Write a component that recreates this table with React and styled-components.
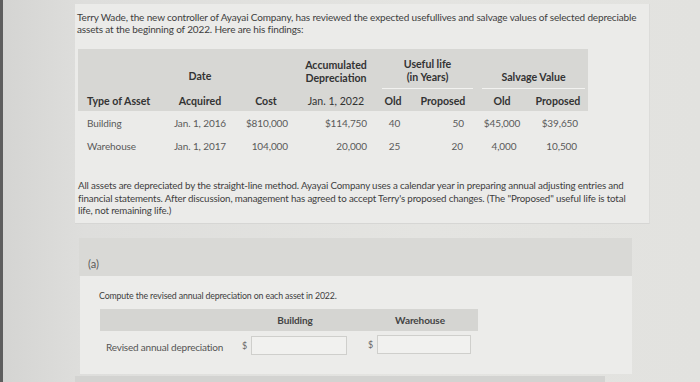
import React from "react";
import styled, { createGlobalStyle } from "styled-components";

const Global = createGlobalStyle`
  html, body { margin: 0; padding: 0; }
  body {
    width: 700px;
    height: 382px;
    overflow: hidden;
    font-family: Lato, "Open Sans", "Liberation Sans", sans-serif;
    background: linear-gradient(90deg, #d4d4d2 0%, #dededc 12%, #e4e4e1 60%, #e2e2df 100%);
  }
`;

const Page = styled.div`
  height: 382px;
  box-sizing: border-box;
  border-left: 3px solid #5e5e5e;
  padding: 4px 0 0 72px;
  display: flex;
  flex-direction: column;
`;

const Card = styled.section`
  width: 575px;
  height: 224px;
  box-sizing: border-box;
  background: #ebebe9;
  border-right: 1px solid #dcdcda;
  border-bottom: 1px solid #d6d6d4;
  padding: 7px 0 0 2px;
`;

const Text = styled.p`
  margin: 0;
  font-size: ${(p) => p.$size || 10}px;
  line-height: ${(p) => p.$lh || 12}px;
  color: #3e3e3e;
  letter-spacing: ${(p) => p.$ls ?? -0.15}px;
  white-space: nowrap;
`;

const Grid = styled.div`
  display: grid;
  grid-template-columns: 92px 60px 66px 80px 34px 66px 52px 60px;
  margin: 14px 0 0 1px;
  width: 510px;
`;

const HeadCell = styled.div`
  background: #d7d7d4;
  grid-column: ${(p) => p.$span || "auto"};
  height: ${(p) => p.$h}px;
  box-sizing: border-box;
  display: flex;
  flex-direction: column;
  justify-content: ${(p) => (p.$top ? "flex-end" : "center")};
  align-items: ${(p) => p.$align || "center"};
  text-align: center;
  padding: ${(p) => p.$pad || "0"};
  font-size: 10.6px;
  font-weight: ${(p) => (p.$light ? 400 : 700)};
  line-height: 12.5px;
  color: #333;
  white-space: nowrap;
`;

const GroupLabel = styled.div`
  align-self: stretch;
  margin: 0 3px 2px 6px;
  padding-bottom: 5px;
  border-bottom: 1px solid #f2f2f0;
`;

const DataCell = styled.div`
  height: 23px;
  display: flex;
  align-items: center;
  justify-content: ${(p) => p.$justify || "center"};
  padding: ${(p) => p.$pad || "0"};
  font-size: 10px;
  color: #5a5a5a;
  white-space: nowrap;
  letter-spacing: -0.1px;
`;

const Para = styled.div`
  margin-top: 22px;
  padding-left: 1px;
`;

const PartBar = styled.div`
  margin: 14px 0 0 4px;
  width: 553px;
  height: 38px;
  box-sizing: border-box;
  background: #d9d9d6;
  display: flex;
  align-items: flex-end;
  padding: 0 0 6px 9px;
  font-size: 11px;
  color: #5a5a5a;
`;

const Panel = styled.div`
  margin-left: 5px;
  width: 552px;
  height: 100px;
  box-sizing: border-box;
  background: #ececea;
  padding: 14px 0 0 19px;
`;

const SubGrid = styled.div`
  display: grid;
  grid-template-columns: 136px 126px 116px;
  margin: 7px 0 0 1px;
  width: 378px;
`;

const SubHead = styled.div`
  background: #d5d5d2;
  height: 22px;
  box-sizing: border-box;
  padding-right: ${(p) => p.$pr || 0}px;
  display: flex;
  align-items: center;
  justify-content: center;
  font-size: 10px;
  font-weight: 700;
  color: #444;
  letter-spacing: -0.1px;
`;

const RowLabel = styled.div`
  height: 27px;
  display: flex;
  align-items: center;
  padding: 6px 0 0 6px;
  box-sizing: border-box;
  font-size: 10px;
  color: #555;
  letter-spacing: -0.2px;
  white-space: nowrap;
`;

const InputWrap = styled.div`
  height: 27px;
  display: flex;
  align-items: center;
  padding: ${(p) => (p.$up ? "0" : "2px")} 0 0 6px;
  box-sizing: border-box;
  gap: 4px;
  font-size: 9px;
  color: #666;
`;

const Input = styled.div`
  width: ${(p) => p.$w}px;
  height: 19px;
  box-sizing: border-box;
  border: 1px solid #cfcfcc;
  background: #f1f1ef;
`;

const Footer = styled.div`
  margin: 2px 0 0 0;
  width: 530px;
  height: 6px;
  background: #d3d3d1;
`;

export default function App() {
  return (
    <>
      <Global />
      <Page>
        <Card>
          <Text>
            Terry Wade, the new controller of Ayayai Company, has reviewed the expected usefullives and salvage values of selected depreciable
            <br />
            assets at the beginning of 2022. Here are his findings:
          </Text>
          <Grid>
            <HeadCell $h={42} />
            <HeadCell $h={42} $top $pad="0 0 9px 0">Date</HeadCell>
            <HeadCell $h={42} />
            <HeadCell $h={42} $top $pad="0 0 7px 0">
              Accumulated
              <br />
              Depreciation
            </HeadCell>
            <HeadCell $h={42} $span="span 2" $top>
              <GroupLabel>
                Useful life
                <br />
                (in Years)
              </GroupLabel>
            </HeadCell>
            <HeadCell $h={42} $span="span 2" $top>
              <GroupLabel>Salvage Value</GroupLabel>
            </HeadCell>

            <HeadCell $h={20} $align="flex-start" $pad="0 0 0 9px">Type of Asset</HeadCell>
            <HeadCell $h={20}>Acquired</HeadCell>
            <HeadCell $h={20} $pad="0 0 0 6px">Cost</HeadCell>
            <HeadCell $h={20} $light>Jan. 1, 2022</HeadCell>
            <HeadCell $h={20}>Old</HeadCell>
            <HeadCell $h={20}>Proposed</HeadCell>
            <HeadCell $h={20}>Old</HeadCell>
            <HeadCell $h={20}>Proposed</HeadCell>

            <DataCell $justify="flex-start" $pad="0 0 0 9px">Building</DataCell>
            <DataCell>Jan. 1, 2016</DataCell>
            <DataCell $justify="flex-end" $pad="0 8px 0 0">$810,000</DataCell>
            <DataCell $justify="flex-end" $pad="0 9px 0 0">$114,750</DataCell>
            <DataCell $pad="0 0 0 3px">40</DataCell>
            <DataCell $justify="flex-end" $pad="0 12px 0 0">50</DataCell>
            <DataCell>$45,000</DataCell>
            <DataCell $justify="flex-end" $pad="0 10px 0 0">$39,650</DataCell>

            <DataCell $justify="flex-start" $pad="0 0 0 9px">Warehouse</DataCell>
            <DataCell>Jan. 1, 2017</DataCell>
            <DataCell $justify="flex-end" $pad="0 8px 0 0">104,000</DataCell>
            <DataCell $justify="flex-end" $pad="0 9px 0 0">20,000</DataCell>
            <DataCell $pad="0 0 0 3px">25</DataCell>
            <DataCell $justify="flex-end" $pad="0 13px 0 0">20</DataCell>
            <DataCell $pad="0 0 0 4px">4,000</DataCell>
            <DataCell $justify="flex-end" $pad="0 11px 0 0">10,500</DataCell>
          </Grid>
          <Para>
            <Text $lh={12.5} $size={9.75}>
              All assets are depreciated by the straight-line method. Ayayai Company uses a calendar year in preparing annual adjusting entries and
              <br />
              financial statements. After discussion, management has agreed to accept Terry's proposed changes. (The "Proposed" useful life is total
              <br />
              life, not remaining life.)
            </Text>
          </Para>
        </Card>
        <PartBar>(a)</PartBar>
        <Panel>
          <Text $size={8.8}>Compute the revised annual depreciation on each asset in 2022.</Text>
          <SubGrid>
            <SubHead />
            <SubHead $pr={8}>Building</SubHead>
            <SubHead>Warehouse</SubHead>
            <RowLabel>Revised annual depreciation</RowLabel>
            <InputWrap>
              $<Input $w={96} />
            </InputWrap>
            <InputWrap $up>
              $<Input $w={94} />
            </InputWrap>
          </SubGrid>
        </Panel>
        <Footer />
      </Page>
    </>
  );
}
